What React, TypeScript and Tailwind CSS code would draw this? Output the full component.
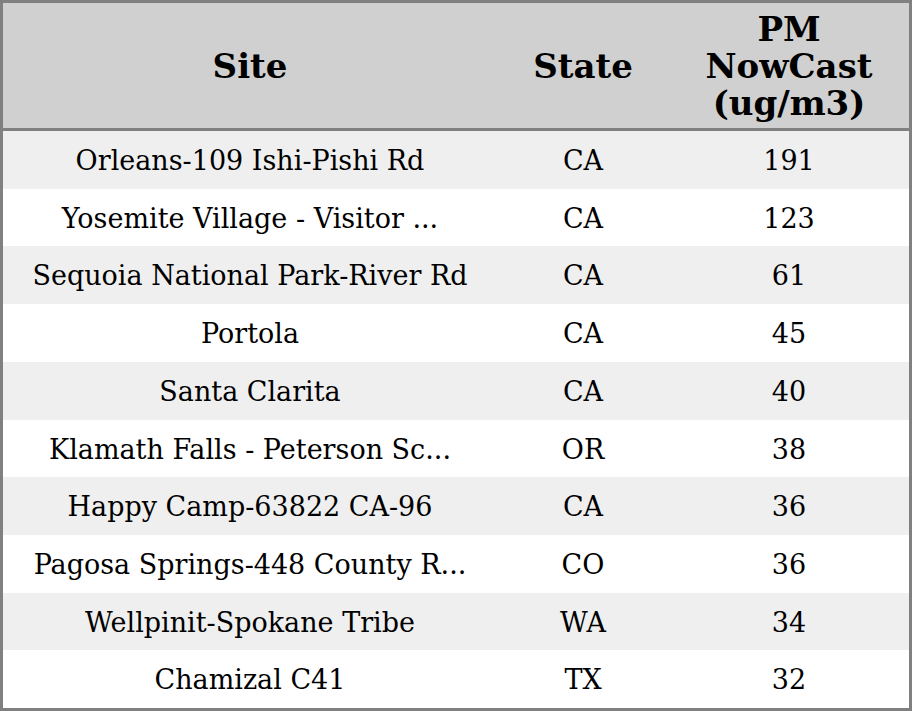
const rows: [string, string, number][] = [
  ['Orleans-109 Ishi-Pishi Rd', 'CA', 191],
  ['Yosemite Village - Visitor ...', 'CA', 123],
  ['Sequoia National Park-River Rd', 'CA', 61],
  ['Portola', 'CA', 45],
  ['Santa Clarita', 'CA', 40],
  ['Klamath Falls - Peterson Sc...', 'OR', 38],
  ['Happy Camp-63822 CA-96', 'CA', 36],
  ['Pagosa Springs-448 County R...', 'CO', 36],
  ['Wellpinit-Spokane Tribe', 'WA', 34],
  ['Chamizal C41', 'TX', 32],
];

export default function App() {
  return (
    <div className="w-[912px] h-[711px] bg-white font-['DejaVu_Serif',serif] text-black">
      <div className="h-full border-[3px] border-[#808080] flex flex-col">
        {/* header */}
        <div className="grid grid-cols-[494px_172px_240px] h-[128px] pt-[2px] bg-[#d0d0d0] border-b-[3px] border-[#808080] text-[34px] font-bold leading-[37px]">
          <div className="flex items-center justify-center">Site</div>
          <div className="flex items-center justify-center">State</div>
          <div className="flex items-center justify-center text-center">
            PM
            <br />
            NowCast
            <br />
            (ug/m3)
          </div>
        </div>

        {/* rows */}
        <div className="flex-1 grid grid-rows-10 text-[27px]">
          {rows.map(([site, state, pm], i) => (
            <div
              key={site}
              className={`grid grid-cols-[494px_172px_240px] items-center pt-[3px] text-center ${
                i % 2 === 0 ? 'bg-[#efefef]' : 'bg-white'
              }`}
            >
              <div>{site}</div>
              <div>{state}</div>
              <div>{pm}</div>
            </div>
          ))}
        </div>
      </div>
    </div>
  );
}
